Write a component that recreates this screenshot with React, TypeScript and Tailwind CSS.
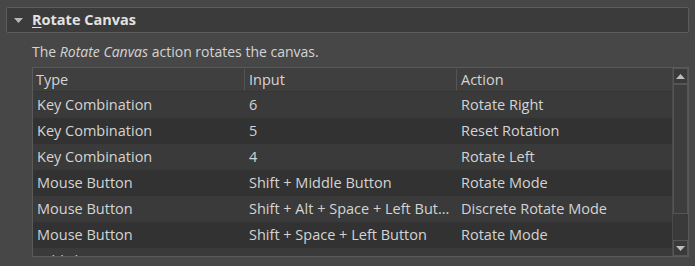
const rows = [
  ["Key Combination", "6", "Rotate Right"],
  ["Key Combination", "5", "Reset Rotation"],
  ["Key Combination", "4", "Rotate Left"],
  ["Mouse Button", "Shift + Middle Button", "Rotate Mode"],
  ["Mouse Button", "Shift + Alt + Space + Left But...", "Discrete Rotate Mode"],
  ["Mouse Button", "Shift + Space + Left Button", "Rotate Mode"],
];

const App = () => {
  return (
    <div
      className="w-[695px] h-[266px] overflow-hidden bg-[#474747] text-[#d4d4d4] text-[14px]"
      style={{ fontFamily: '"Open Sans", "Noto Sans", sans-serif' }}
    >
      <div className="pt-[7px] px-[6px]">
        <div className="h-[26px] flex items-center bg-[#3b3b3b] border border-[#5c5c5c] rounded-[2px]">
          <svg width="9" height="5" viewBox="0 0 9 5" className="ml-[7px] mr-[9px]">
            <path d="M0 0 H9 L4.5 5 Z" fill="#b8b8b8" />
          </svg>
          <span className="font-bold text-[14.5px] text-[#e2e2e2]">
            <span className="underline underline-offset-2">R</span>otate Canvas
          </span>
        </div>
      </div>

      <div className="pl-[32px] pr-[6px]">
        <p className="h-[34px] pt-[8px] leading-[22px]">
          The <i>Rotate Canvas</i> action rotates the canvas.
        </p>

        <div className="flex border border-[#5a5a5a] h-[190px] overflow-hidden bg-[#333] text-[14.5px]">
          <div className="flex-1 min-w-0">
            <div className="flex h-[24px] items-center bg-[#3f3f3f] border-b border-[#353535]">
              <div className="w-[212px] pl-[3px] border-r border-[#555]">Type</div>
              <div className="w-[212px] pl-[4px] border-r border-[#555]">Input</div>
              <div className="flex-1 pl-[4px]">Action</div>
            </div>
            {rows.map((r, i) => (
              <div
                key={i}
                className={
                  "flex h-[26px] items-center " +
                  (i % 2 === 0 ? "bg-[#3a3a3a]" : "bg-[#323232]")
                }
              >
                <div className="w-[212px] pl-[4px]">{r[0]}</div>
                <div className="w-[212px] pl-[4px] whitespace-nowrap">{r[1]}</div>
                <div className="flex-1 pl-[4px] whitespace-nowrap">{r[2]}</div>
              </div>
            ))}
            <div className="h-[26px] pl-[4px] bg-[#3a3a3a] leading-[26px]">Add shortcut...</div>
          </div>

          <div className="w-[16px] flex flex-col bg-[#3a3a3a] border-l border-[#4a4a4a]">
            <div className="h-[16px] flex items-center justify-center border border-[#555]">
              <svg width="9" height="5" viewBox="0 0 9 5">
                <path d="M0 5 H9 L4.5 0 Z" fill="#bdbdbd" />
              </svg>
            </div>
            <div className="h-[130px] border border-[#555] bg-[#3d3d3d]" />
            <div className="flex-1" />
            <div className="h-[16px] flex items-center justify-center border border-[#555]">
              <svg width="9" height="5" viewBox="0 0 9 5">
                <path d="M0 0 H9 L4.5 5 Z" fill="#bdbdbd" />
              </svg>
            </div>
          </div>
        </div>
      </div>
    </div>
  );
};

export default App;
